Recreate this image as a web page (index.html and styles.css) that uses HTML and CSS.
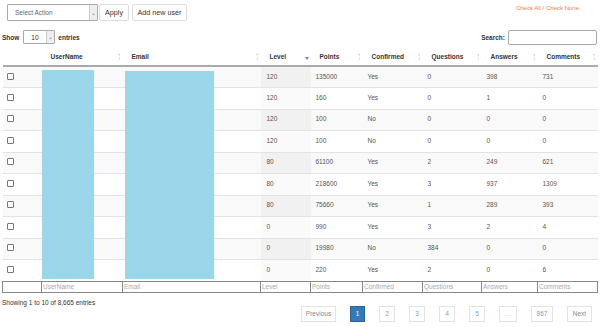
FILE: index.html
```html
<!DOCTYPE html>
<html lang="en">
<head>
    <meta charset="UTF-8">
    <meta name="viewport" content="width=device-width, initial-scale=1.0">
    <title>Users</title>
    <link rel="stylesheet" href="styles.css">
</head>
<body>
    <!-- Toolbar -->
    <div class="toolbar">
        <div class="action-select">
            <span class="sel-text">Select Action</span>
            <span class="sel-arrow">&#8964;</span>
        </div>
        <button class="btn btn-apply">Apply</button>
        <button class="btn btn-add">Add new user</button>
        <div class="check-links">
            <a href="#">Check All</a> / <a href="#">Check None</a>
        </div>
    </div>

    <!-- Length + search -->
    <div class="dt-top">
        <div class="dt-length">
            <b>Show</b>
            <div class="len-select">
                <span class="len-text">10</span>
                <span class="sel-arrow">&#8964;</span>
            </div>
            <b>entries</b>
        </div>
        <div class="dt-search">
            <b>Search:</b>
            <input type="text" class="search-input">
        </div>
    </div>

    <!-- Users table -->
    <div class="table-wrap">
        <table class="users">
            <colgroup>
                <col style="width:39px">
                <col style="width:81px">
                <col style="width:138px">
                <col style="width:50px">
                <col style="width:52px">
                <col style="width:60px">
                <col style="width:59px">
                <col style="width:56px">
                <col style="width:60px">
            </colgroup>
            <thead>
                <tr>
                    <th class="th-check"></th>
                    <th><div class="th-in"><span>UserName</span><i class="sort"></i></div></th>
                    <th><div class="th-in"><span>Email</span><i class="sort"></i></div></th>
                    <th><div class="th-in"><span>Level</span><i class="sort-desc"></i></div></th>
                    <th><div class="th-in"><span>Points</span><i class="sort"></i></div></th>
                    <th><div class="th-in"><span>Confirmed</span><i class="sort"></i></div></th>
                    <th><div class="th-in"><span>Questions</span><i class="sort"></i></div></th>
                    <th><div class="th-in"><span>Answers</span><i class="sort"></i></div></th>
                    <th><div class="th-in"><span>Comments</span><i class="sort"></i></div></th>
                </tr>
            </thead>
            <tbody id="rows"></tbody>
            <tfoot>
                <tr>
                    <td></td>
                    <td>UserName</td>
                    <td>Email</td>
                    <td>Level</td>
                    <td>Points</td>
                    <td>Confirmed</td>
                    <td>Questions</td>
                    <td>Answers</td>
                    <td>Comments</td>
                </tr>
            </tfoot>
        </table>
        <!-- redacted columns -->
        <div class="redact redact-name"></div>
        <div class="redact redact-email"></div>
    </div>

    <!-- Info + paging -->
    <div class="dt-bottom">
        <div class="dt-info">Showing 1 to 10 of 8,665 entries</div>
        <div class="paging">
            <a class="pg pg-wide" href="#">Previous</a>
            <a class="pg current" href="#">1</a>
            <a class="pg" href="#">2</a>
            <a class="pg" href="#">3</a>
            <a class="pg" href="#">4</a>
            <a class="pg" href="#">5</a>
            <span class="pg pg-dots">…</span>
            <a class="pg pg-last" href="#">867</a>
            <a class="pg pg-next" href="#">Next</a>
        </div>
    </div>

    <script>
        // level, points, confirmed, questions, answers, comments
        const users = [
            [120, 135000, 'Yes', 0, 398, 731],
            [120, 160, 'Yes', 0, 1, 0],
            [120, 100, 'No', 0, 0, 0],
            [120, 100, 'No', 0, 0, 0],
            [80, 61100, 'Yes', 2, 249, 621],
            [80, 218600, 'Yes', 3, 937, 1309],
            [80, 75660, 'Yes', 1, 289, 393],
            [0, 990, 'Yes', 3, 2, 4],
            [0, 19980, 'No', 384, 0, 0],
            [0, 220, 'Yes', 2, 0, 6]
        ];

        const tbody = document.getElementById('rows');
        users.forEach(function(u) {
            const tr = document.createElement('tr');
            tr.innerHTML =
                '<td class="td-check"><input type="checkbox"></td>' +
                '<td></td><td></td>' +
                '<td class="sorted">' + u[0] + '</td>' +
                '<td>' + u[1] + '</td>' +
                '<td>' + u[2] + '</td>' +
                '<td>' + u[3] + '</td>' +
                '<td>' + u[4] + '</td>' +
                '<td>' + u[5] + '</td>';
            tbody.appendChild(tr);
        });
    </script>
</body>
</html>
```

FILE: styles.css
```css
/* Base */
body {
    margin: 0;
    font-family: "Liberation Sans", Arial, sans-serif;
    font-size: 6.5px;
    color: #333;
    background: #fff;
}

a {
    text-decoration: none;
}

/* Toolbar */
.toolbar {
    display: flex;
    align-items: center;
    height: 17px;
    padding: 4px 0 0 7px;
}

.action-select {
    display: flex;
    align-items: center;
    justify-content: space-between;
    width: 91px;
    height: 17px;
    box-sizing: border-box;
    border: 1px solid #aaa;
    border-radius: 1px;
    background: #fff;
}

.sel-text {
    padding-left: 7px;
    color: #666;
    font-size: 6.5px;
}

.sel-arrow {
    display: flex;
    align-items: center;
    justify-content: center;
    width: 8px;
    height: 100%;
    box-sizing: border-box;
    border-left: 1px solid #ccc;
    background: #eee;
    color: #777;
    font-size: 6px;
    line-height: 1;
}

.btn {
    height: 17px;
    margin-left: 1px;
    padding: 0 6px;
    border: 1px solid #ddd;
    border-radius: 2px;
    background: #fff;
    color: #333;
    font-family: "Liberation Sans", Arial, sans-serif;
    font-size: 7.2px;
}

.btn-add {
    margin-left: 3px;
    width: 55px;
    padding: 0;
}

.btn-apply {
    width: 30px;
    padding: 0;
}

.check-links {
    margin-left: auto;
    margin-right: 21px;
    margin-top: -9px;
    font-size: 6px;
    color: #e8825a;
}

.check-links a {
    color: #e8825a;
}

/* Length + search */
.dt-top {
    display: flex;
    align-items: center;
    justify-content: space-between;
    height: 16px;
    margin-top: 8px;
    padding: 0 3px 0 2px;
}

.dt-length, .dt-search {
    display: flex;
    align-items: center;
    gap: 3px;
}

.len-select {
    display: flex;
    align-items: center;
    justify-content: space-between;
    width: 32px;
    height: 14px;
    box-sizing: border-box;
    border: 1px solid #aaa;
    border-radius: 1px;
    margin-left: 1px;
}

.len-text {
    padding-left: 7px;
}

.search-input {
    width: 89px;
    height: 15px;
    box-sizing: border-box;
    margin: 0;
    border: 1px solid #aaa;
    border-radius: 2px;
}

/* Table */
.table-wrap {
    position: relative;
    margin: 3px 3px 0 2px;
}

.users {
    width: 595px;
    border-collapse: collapse;
    table-layout: fixed;
}

.users th {
    height: 17px;
    padding: 0 2px 0 9px;
    border-bottom: 2px solid #aaa;
    text-align: left;
    font-weight: bold;
    color: #333;
}

.th-in {
    display: flex;
    align-items: center;
    justify-content: space-between;
}

.sort {
    width: 3px;
    height: 6px;
    background:
        linear-gradient(to top right, transparent 50%, #ddd 50%) 0 0 / 1.5px 2.5px no-repeat,
        linear-gradient(to top left, transparent 50%, #ddd 50%) 1.5px 0 / 1.5px 2.5px no-repeat,
        linear-gradient(to bottom right, transparent 50%, #ddd 50%) 0 3.5px / 1.5px 2.5px no-repeat,
        linear-gradient(to bottom left, transparent 50%, #ddd 50%) 1.5px 3.5px / 1.5px 2.5px no-repeat;
}

.sort-desc {
    width: 0;
    height: 0;
    margin-top: 4px;
    border-left: 2px solid transparent;
    border-right: 2px solid transparent;
    border-top: 3px solid #7a7ad0;
}

.users tbody tr {
    height: 21.5px;
    border-top: 1px solid #e3e3e3;
}

.users tbody tr:first-child {
    border-top: none;
}

.users tbody tr:nth-child(odd) {
    background: #f9f9f9;
}

.users tbody td {
    padding: 0 4px 2px 5px;
    color: #555;
    vertical-align: middle;
}

.users tbody td.td-check {
    padding-left: 4px;
}

.users tbody td.sorted {
    padding-left: 6px;
    background: #fafafa;
}

.users tbody tr:nth-child(odd) td.sorted {
    background: #f1f1f1;
}

.td-check input {
    appearance: none;
    width: 7px;
    height: 7px;
    margin: 0;
    border: 1px solid #777;
    border-radius: 1px;
    background: #fff;
    display: block;
}

.users tfoot td {
    height: 10px;
    padding: 0 1px;
    border: 1px solid #888;
    color: #aaa;
    line-height: 10px;
}

.redact {
    position: absolute;
    top: 22px;
    bottom: 14px;
    background: #9ad7ea;
}

.redact-name {
    left: 40px;
    width: 52px;
}

.redact-email {
    left: 123px;
    width: 89px;
    top: 23px;
}

/* Info + paging */
.dt-bottom {
    display: flex;
    justify-content: space-between;
    padding: 3px 8px 0 2px;
}

.dt-info {
    margin-top: 3px;
}

.paging {
    display: flex;
    gap: 14px;
    margin-top: 10px;
}

.pg {
    display: flex;
    align-items: center;
    justify-content: center;
    width: 16px;
    height: 16px;
    box-sizing: border-box;
    border: 1px solid #e3e3e3;
    background: #fff;
    color: #7fa0c4;
    font-size: 6.5px;
}

.pg.current {
    width: 15px;
    background: #337ab7;
    border-color: #2a6496;
    color: #fff;
}

.pg-wide {
    width: 35px;
    color: #888;
}

.pg-dots {
    width: 18px;
    color: #bbb;
}

.pg-last {
    width: 22px;
}

.pg-next {
    width: 25px;
    color: #888;
}
```
